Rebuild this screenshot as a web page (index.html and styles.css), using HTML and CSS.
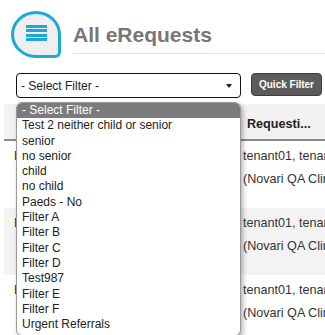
FILE: index.html
```html
<!DOCTYPE html>
<html lang="en">
<head>
  <meta charset="UTF-8" />
  <meta name="viewport" content="width=device-width, initial-scale=1.0" />
  <title>All eRequests</title>
  <link rel="stylesheet" href="styles.css">
</head>
<body>

<div class="page-head">
  <div class="menu-icon">
    <span></span>
    <span></span>
    <span></span>
    <span></span>
  </div>
  <h1 class="page-title">All eRequests</h1>
</div>

<div class="filter-bar">
  <div class="select-wrap">
    <div class="select-box">
      <span>- Select Filter -</span>
      <i class="caret"></i>
    </div>
    <ul class="select-list">
      <li class="active">- Select Filter -</li>
      <li>Test 2 neither child or senior</li>
      <li>senior</li>
      <li>no senior</li>
      <li>child</li>
      <li>no child</li>
      <li>Paeds - No</li>
      <li>Filter A</li>
      <li>Filter B</li>
      <li>Filter C</li>
      <li>Filter D</li>
      <li>Test987</li>
      <li>Filter E</li>
      <li>Filter F</li>
      <li>Urgent Referrals</li>
    </ul>
  </div>
  <button class="quick-btn">Quick Filter</button>
</div>

<div class="req-table">
  <div class="row head">
    <div class="cell"></div>
    <div class="cell">Requesti...</div>
  </div>
  <div class="row">
    <div class="cell">Electronic</div>
    <div class="cell"><div>tenant01, tenant01</div><div>(Novari QA Clinic)</div></div>
  </div>
  <div class="row alt">
    <div class="cell">Electronic</div>
    <div class="cell"><div>tenant01, tenant01</div><div>(Novari QA Clinic)</div></div>
  </div>
  <div class="row">
    <div class="cell">Electronic</div>
    <div class="cell"><div>tenant01, tenant01</div><div>(Novari QA Clinic)</div></div>
  </div>
  <div class="row alt">
    <div class="cell">Electronic</div>
    <div class="cell"><div>tenant01, tenant01</div><div>(Novari QA Clinic)</div></div>
  </div>
</div>

</body>
</html>
```

FILE: styles.css
```css
body {
  font-family: "Liberation Sans", Arial, sans-serif;
  margin: 0;
  padding: 0;
  background-color: white;
  color: #333;
  overflow: hidden;
}

.page-head {
  display: flex;
  align-items: flex-start;
  padding: 11px 0 0 11px;
}

.menu-icon {
  width: 44px;
  height: 38px;
  border: 3px solid #1aa9d8;
  border-radius: 50% 50% 6px 50%;
  background-color: #efefef;
  display: flex;
  flex-direction: column;
  justify-content: center;
  align-items: center;
  gap: 1.5px;
  padding-bottom: 3px;
  box-sizing: content-box;
}

.menu-icon span {
  display: block;
  width: 21px;
  height: 3px;
  background: #1aa9d8;
}

.page-title {
  flex: 1;
  margin: 0 0 0 12px;
  padding: 12px 0 6px;
  font-size: 21px;
  line-height: 24px;
  font-weight: bold;
  color: #777;
  border-bottom: 1px solid #ddd;
}

.filter-bar {
  display: flex;
  align-items: flex-start;
  padding-left: 16px;
  margin-top: 15px;
}

.select-wrap {
  position: relative;
  width: 225px;
}

.select-box {
  height: 25px;
  box-sizing: border-box;
  border: 1.5px solid #111;
  border-radius: 4px;
  display: flex;
  align-items: center;
  justify-content: space-between;
  padding: 0 8px 0 4px;
  font-size: 12px;
  color: #222;
}

.caret {
  width: 0;
  height: 0;
  border-left: 3.5px solid transparent;
  border-right: 3.5px solid transparent;
  border-top: 4px solid #222;
}

.select-list {
  position: absolute;
  top: 29px;
  left: 0;
  width: 225px;
  box-sizing: border-box;
  margin: 0;
  padding: 0 0 3px;
  list-style: none;
  background: white;
  border: 1px solid #999;
  border-radius: 6px;
  box-shadow: 2px 3px 5px rgba(0, 0, 0, 0.3);
  font-size: 12px;
  line-height: 15.3px;
  color: #222;
  z-index: 10;
  overflow: hidden;
}

.select-list li {
  padding-left: 5px;
  white-space: nowrap;
}

.select-list li.active {
  background-color: #7b7b7b;
  color: white;
}

.quick-btn {
  margin-left: 10px;
  width: 71px;
  height: 23px;
  padding: 0;
  background-color: #5b5b5b;
  border: 1px solid #3d3d3d;
  border-radius: 4px;
  color: white;
  font-family: "Liberation Sans", Arial, sans-serif;
  font-size: 10px;
  font-weight: bold;
}

.req-table {
  margin: 6px 0 0 4px;
}

.row {
  display: grid;
  grid-template-columns: 239px 1fr;
  height: 67px;
  font-size: 12.6px;
  line-height: 23px;
  white-space: nowrap;
}

.row .cell {
  padding-top: 4px;
}

.row .cell:first-child {
  padding-left: 10px;
  color: #4a2e1a;
}

.row.alt {
  background-color: #f3f3f3;
}

.row.head {
  height: auto;
  background-color: #f2f2f2;
  border-bottom: 2px solid #8a8a8a;
  font-weight: bold;
  color: #222;
  line-height: 16px;
}

.row.head .cell {
  padding: 12px 0 7px;
}

.row.head .cell:last-child {
  padding-left: 4px;
}
```
